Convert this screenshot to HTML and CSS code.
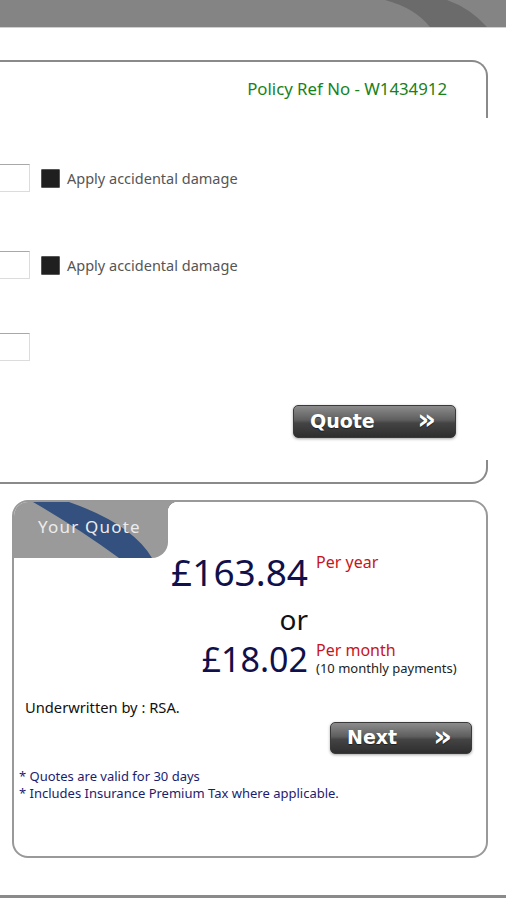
FILE: index.html
```html
<html>
<head>
	<meta charset="utf-8">
	<meta name="viewport" content="width=device-width, initial-scale=1">
	<title>Your Quote</title>
	<link rel="stylesheet" href="styles.css">
</head>
<body>

	<header class="topbar">
		<svg class="swoosh" width="506" height="27" viewBox="0 0 506 27">
			<path d="M385 0 Q415 8 430 27 L487 27 Q470 8 447 0 Z" fill="#6b6b6b"/>
		</svg>
	</header>

	<main>
		<section class="policy">
			<div class="policy-top">
				<p class="ref">Policy Ref No - W1434912</p>
			</div>
			<div class="policy-body">
				<div class="field">
					<span class="box"></span>
					<span class="check"></span>
					<label>Apply accidental damage</label>
				</div>
				<div class="field second">
					<span class="box"></span>
					<span class="check"></span>
					<label>Apply accidental damage</label>
				</div>
				<div class="field third">
					<span class="box"></span>
				</div>
				<div class="actions">
					<button class="btn">Quote <span class="arrows">»</span></button>
				</div>
			</div>
			<div class="policy-bottom"></div>
		</section>

		<section class="quote">
			<div class="tab"><span>Your Quote</span></div>
			<div class="price first">
				<span class="amount">£163.84</span>
				<span class="label"><em>Per year</em></span>
			</div>
			<div class="price or">
				<span class="amount">or</span>
			</div>
			<div class="price month">
				<span class="amount">£18.02</span>
				<span class="label"><em>Per month</em><small>(10 monthly payments)</small></span>
			</div>
			<p class="insurer">Underwritten by : RSA.</p>
			<div class="next-row">
				<button class="btn next">Next <span class="arrows">»</span></button>
			</div>
			<p class="notes">* Quotes are valid for 30 days<br>* Includes Insurance Premium Tax where applicable.</p>
		</section>
	</main>

	<footer class="bottombar"></footer>

</body>
</html>
```

FILE: styles.css
```css
*{
	box-sizing: border-box;
	padding: 0;
	margin: 0;
}
body
{
	width: 506px;
	height: 900px;
	overflow: hidden;
	background: #fff;
	font-family: "Noto Sans", "Open Sans", sans-serif;
}
.topbar
{
	height: 28px;
	background: #848484;
	border-bottom: 1px solid #d0d0d0;
}
.swoosh
{
	display: block;
}

/* policy form panel */
.policy
{
	margin: 32px 0 0 -20px;
	width: 508px;
}
.policy-top
{
	height: 58px;
	border-top: 2px solid #8a8a8a;
	border-right: 2px solid #8a8a8a;
	border-top-right-radius: 16px;
	padding: 17px 39px 0 0;
	text-align: right;
}
.ref
{
	color: #17821a;
	font-size: 16.8px;
	line-height: 20px;
}
.policy-body
{
	padding: 46px 32px 22px 0;
}
.field
{
	display: flex;
	align-items: center;
	height: 28px;
}
.second
{
	margin-top: 59px;
}
.third
{
	margin-top: 54px;
}
.box
{
	width: 50px;
	height: 28px;
	border: 1px solid #dcdcdc;
	border-top-color: #a8a8a8;
	background: #fff;
}
.check
{
	width: 19px;
	height: 19px;
	margin-left: 11px;
	background: #1f1f1f;
	border: 1px solid #555;
	border-radius: 1px;
}
.field label
{
	margin-left: 7px;
	font-size: 14.5px;
	color: #555;
}
.actions
{
	display: flex;
	justify-content: flex-end;
	margin-top: 44px;
}
.btn
{
	display: flex;
	justify-content: space-between;
	align-items: center;
	width: 163px;
	height: 33px;
	padding: 0 19px 2px 16px;
	border: 1px solid #3a3a3a;
	border-radius: 5px;
	background: linear-gradient(#8c8c8c, #5e5e5e 45%, #444 55%, #2e2e2e);
	box-shadow: 0 1px 3px rgba(0, 0, 0, 0.35);
	color: #fff;
	font-family: "DejaVu Sans", sans-serif;
	font-weight: bold;
	font-size: 19px;
	text-shadow: 0 1px 1px rgba(0, 0, 0, 0.5);
}
.arrows
{
	font-size: 29px;
	line-height: 1;
	margin-top: -2px;
}
.policy-bottom
{
	height: 24px;
	border-right: 2px solid #8a8a8a;
	border-bottom: 2px solid #8a8a8a;
	border-bottom-right-radius: 16px;
}

/* quote panel */
.quote
{
	margin: 16px 0 0 12px;
	width: 476px;
	height: 358px;
	border: 2px solid #999;
	border-radius: 16px;
	overflow: hidden;
}
.tab
{
	position: relative;
	width: 154px;
	height: 56px;
	padding: 15px 0 0 24px;
	border-bottom-right-radius: 16px;
	background: #9a9a9a;
	color: #ececec;
	font-size: 17px;
	line-height: 20px;
	letter-spacing: 1.2px;
}
.tab::before
{
	content: "";
	position: absolute;
	top: 0;
	left: 0;
	width: 154px;
	height: 56px;
	background: #33507e;
	clip-path: path("M19 0 L55 0 Q118 22 138 56 L105 56 Q64 26 19 0 Z");
}
.tab span
{
	position: relative;
}
.tab::after
{
	content: "";
	position: absolute;
	top: 0;
	right: -10px;
	width: 10px;
	height: 10px;
	background: radial-gradient(circle at 100% 100%, transparent 10px, #9a9a9a 10.5px);
}
.price
{
	display: flex;
	align-items: flex-start;
}
.amount
{
	width: 294px;
	text-align: right;
	color: #10104c;
}
.first
{
	margin-top: -4px;
}
.first .amount
{
	font-size: 37px;
	line-height: 36px;
}
.or
{
	margin-top: 13px;
}
.or .amount
{
	color: #111;
	font-size: 28px;
	line-height: 32px;
}
.month
{
	margin-top: 7px;
}
.month .amount
{
	font-size: 34px;
	line-height: 34px;
}
.label
{
	display: flex;
	flex-direction: column;
	margin: -1px 0 0 8px;
}
.label em
{
	font-style: normal;
	color: #c8141a;
	font-size: 16px;
	line-height: 18px;
}
.label small
{
	margin-top: 1px;
	color: #222;
	font-size: 13px;
	line-height: 16px;
}
.insurer
{
	margin: 21px 0 0 11px;
	font-size: 14.7px;
	line-height: 20px;
	color: #111;
}
.next-row
{
	display: flex;
	justify-content: flex-end;
	margin: 5px 14px 0 0;
}
.next
{
	width: 142px;
	height: 32px;
}
.notes
{
	margin: 14px 0 0 5px;
	font-size: 13px;
	line-height: 17px;
	color: #1c1c70;
}
.bottombar
{
	margin-top: 37px;
	height: 5px;
	border-top: 3px solid #8a8a8a;
}
```
